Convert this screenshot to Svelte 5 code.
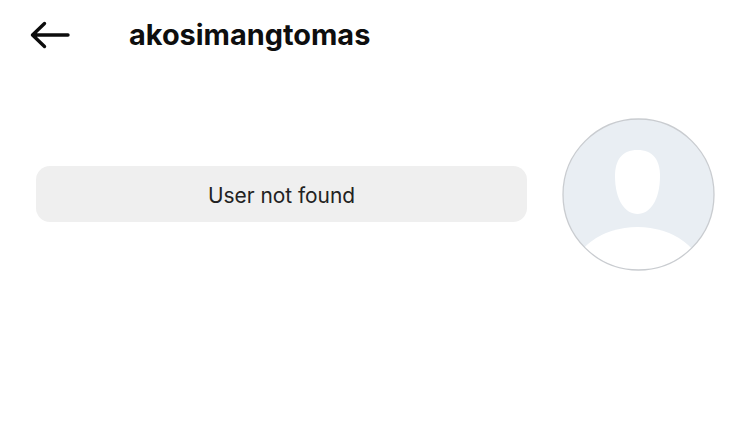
<script>
    let username = "akosimangtomas";
    let message = "User not found";
</script>

<main>
    <header>
        <button class="back" aria-label="Back">
            <svg width="40" height="32" viewBox="0 0 40 32">
                <path d="M38 16H2.500M14.500 4.500L2.500 16L14.500 27.500" fill="none" stroke="#0c0c0c" stroke-width="3.400" stroke-linecap="round" stroke-linejoin="round" />
            </svg>
        </button>
        <h1>{username}</h1>
    </header>

    <section class="content">
        <div class="notice">{message}</div>
        <svg class="avatar" width="153" height="153" viewBox="0 0 153 153">
            <defs>
                <clipPath id="circle-clip"><circle cx="76.500" cy="76.500" r="75.500" /></clipPath>
            </defs>
            <circle cx="76.500" cy="76.500" r="75.500" fill="#e9eef3" />
            <g clip-path="url(#circle-clip)" fill="#fff">
                <path d="M75.500 32C91 32 98 42 98 58C98 82 88 96 75.500 96C63 96 53 82 53 58C53 42 60 32 75.500 32Z" />
                <ellipse cx="75.500" cy="159" rx="66" ry="50" />
            </g>
            <circle cx="76.500" cy="76.500" r="75.500" fill="none" stroke="#c9ccd0" stroke-width="1.300" />
        </svg>
    </section>
</main>

<style>
    :global(body) {
        background: #fff;
    }

    main {
        font-family: Inter, "Liberation Sans", sans-serif;
        height: 427px;
        overflow: hidden;
    }

    header {
        display: flex;
        align-items: center;
        height: 70px;
        padding-left: 30px;
    }

    .back {
        display: flex;
        padding: 0;
        border: none;
        background: none;
        margin-right: 59px;
    }

    h1 {
        margin: 0 0 1px;
        font-size: 28.900px;
        font-weight: 700;
        color: #0e0e0e;
    }

    .content {
        display: flex;
        align-items: center;
        justify-content: space-between;
        padding: 48px 35px 0 36px;
    }

    .notice {
        width: 491px;
        height: 56px;
        margin-bottom: 1px;
        line-height: 59px;
        text-align: center;
        background: #efefef;
        border-radius: 14px;
        font-size: 20.900px;
        color: #222;
    }

    .avatar {
        display: block;
    }
</style>
